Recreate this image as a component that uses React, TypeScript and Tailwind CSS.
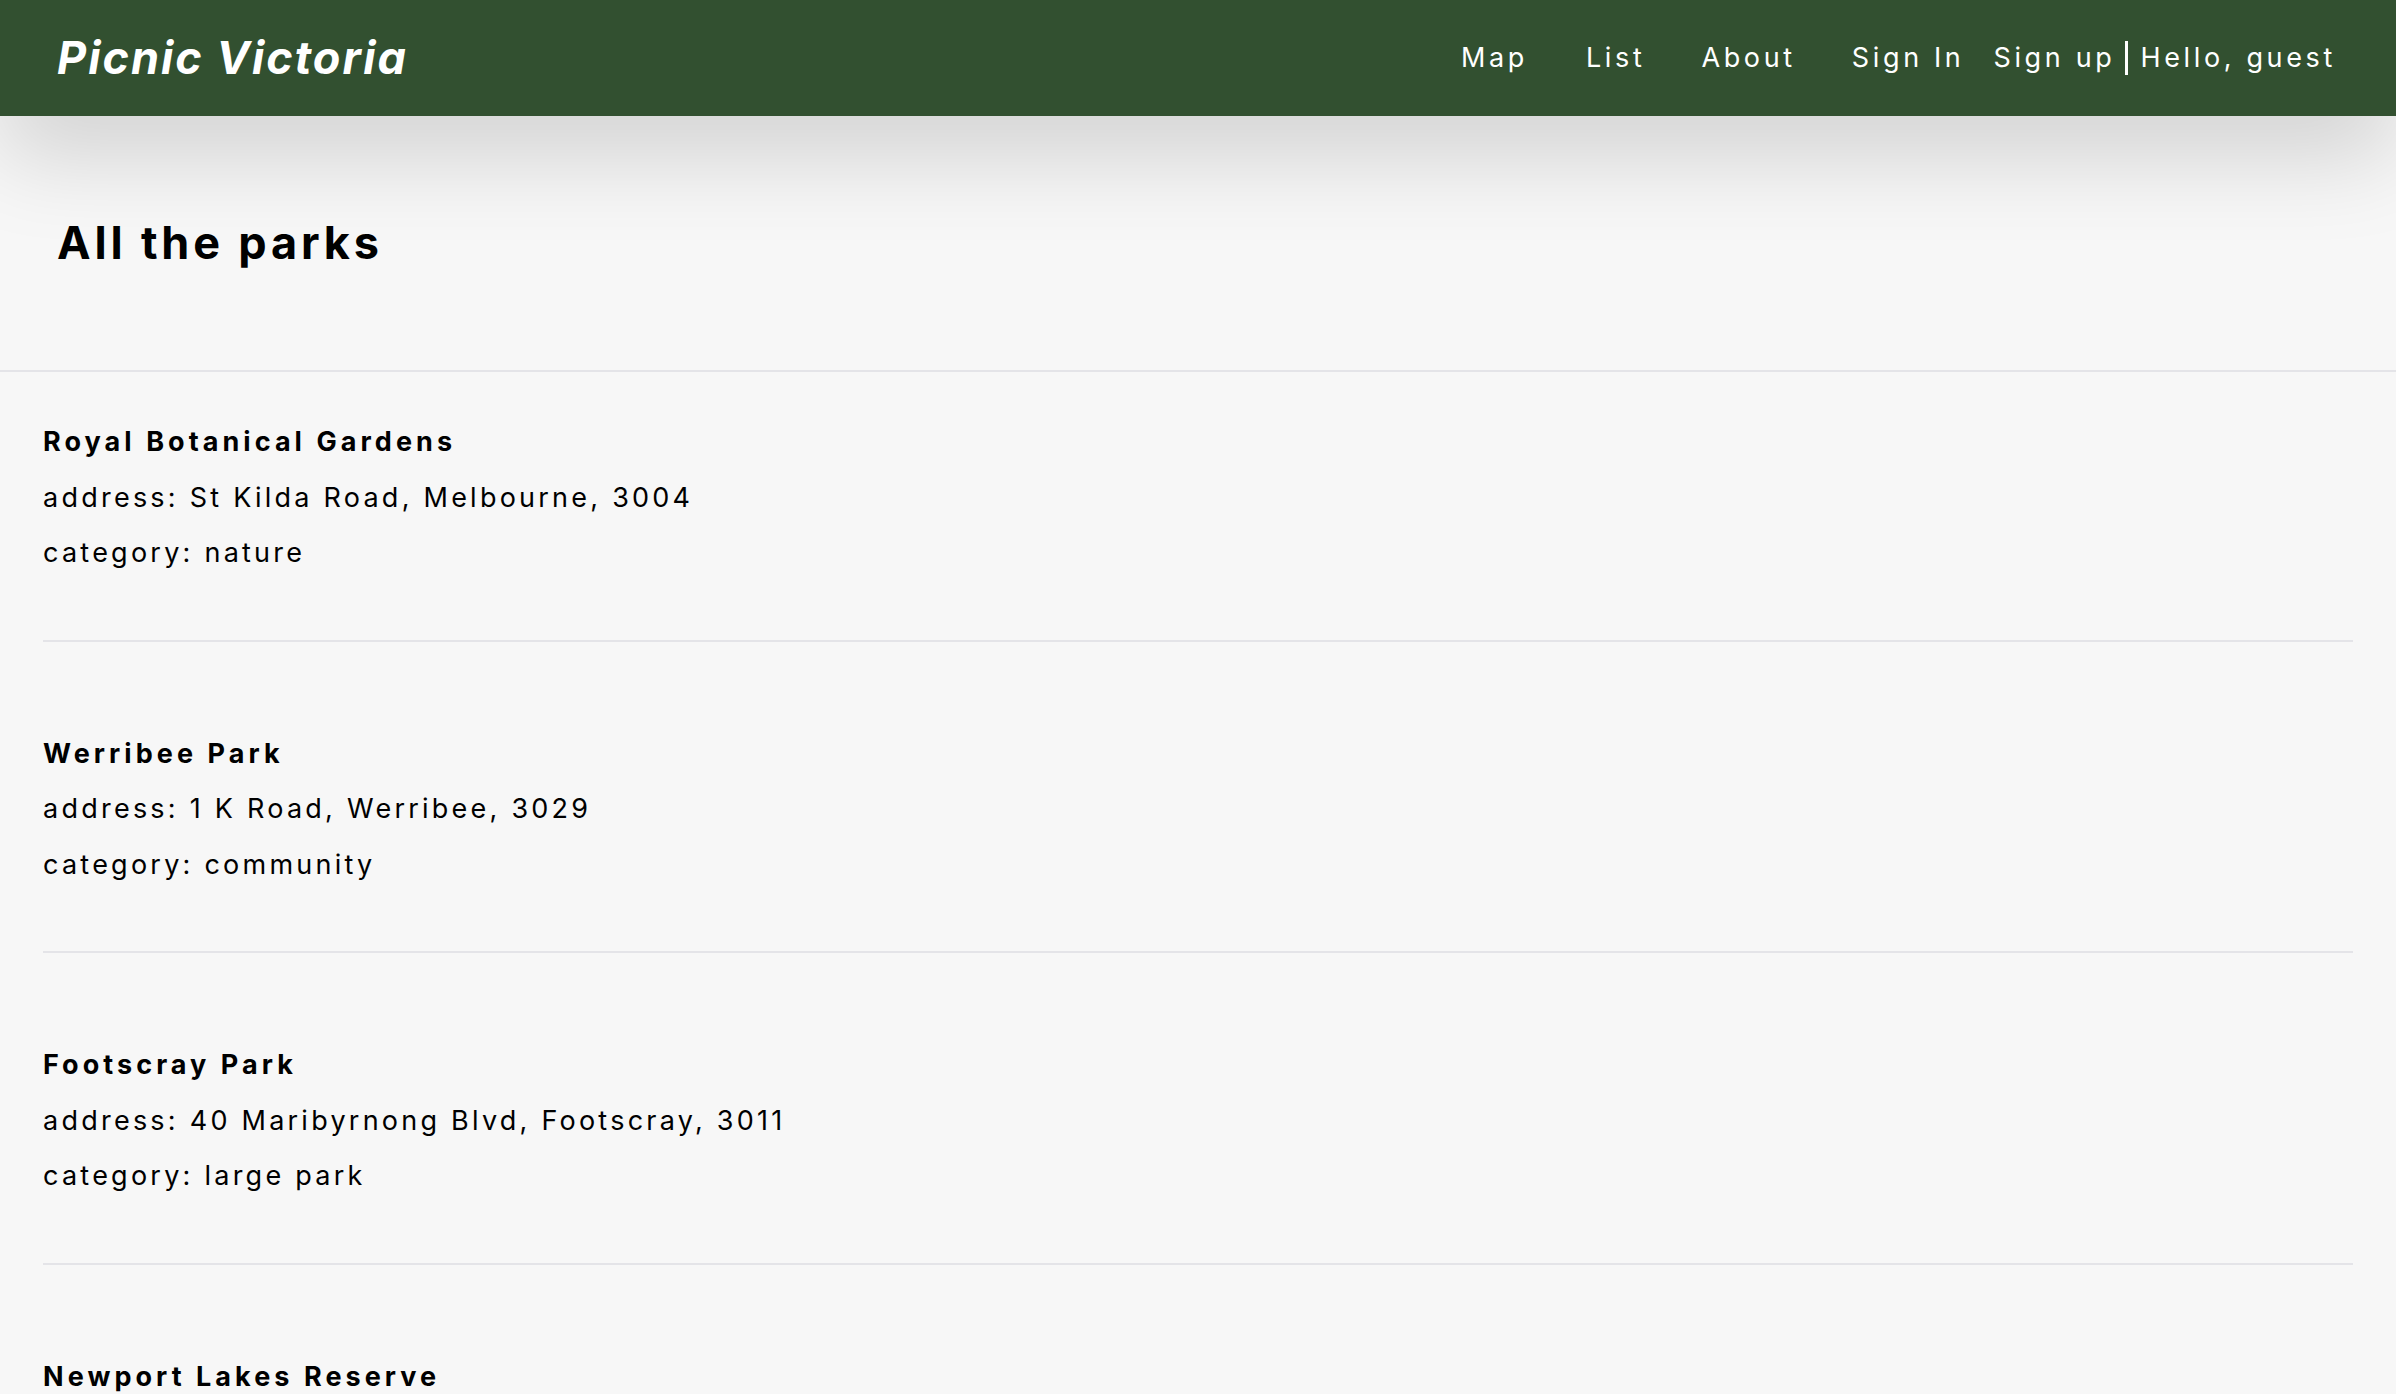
const parks = [
  { name: 'Royal Botanical Gardens', address: 'St Kilda Road, Melbourne, 3004', category: 'nature' },
  { name: 'Werribee Park', address: '1 K Road, Werribee, 3029', category: 'community' },
  { name: 'Footscray Park', address: '40 Maribyrnong Blvd, Footscray, 3011', category: 'large park' },
  { name: 'Newport Lakes Reserve', address: 'Lakes Drive, Newport, 3015', category: 'nature' },
];

function NavBar() {
  return (
    <header className="relative z-10 flex h-[116px] items-center justify-between bg-[#325030] pl-[57px] pr-[60px] text-white shadow-[0_40px_90px_rgba(0,0,0,0.15)]">
      <h1 className="text-[45px] font-bold italic tracking-[0.045em]">Picnic Victoria</h1>
      <nav className="flex items-center text-[27px] tracking-[0.135em]">
        <a className="mr-[58px]">Map</a>
        <a className="mr-[56px]">List</a>
        <a className="mr-[56px]">About</a>
        <a className="mr-[29px]">Sign In</a>
        <a>Sign up</a>
        <span className="mr-[12px] ml-[10px] h-[34px] w-[3px] bg-white" />
        <span>Hello, guest</span>
      </nav>
    </header>
  );
}

export default function App() {
  return (
    <div className="min-h-screen bg-[#f7f7f7] text-black [font-family:Inter,'Liberation_Sans',sans-serif]">
      <NavBar />
      <section className="flex h-[256px] items-center border-b-2 border-[#e4e4e8] pl-[57px]">
        <h2 className="text-[45px] font-bold tracking-[0.085em]">All the parks</h2>
      </section>
      <ul className="px-[43px]">
        {parks.map((park, i) => (
          <li
            key={park.name}
            className={`border-b-2 border-[#e4e4e8] pb-[59px] text-[27px] leading-[55.5px] tracking-[0.12em] ${
              i === 0 ? 'pt-[42px]' : 'pt-[84px]'
            }`}
          >
            <p className="font-bold tracking-[0.15em]">{park.name}</p>
            <p>address: {park.address}</p>
            <p>category: {park.category}</p>
          </li>
        ))}
      </ul>
    </div>
  );
}
